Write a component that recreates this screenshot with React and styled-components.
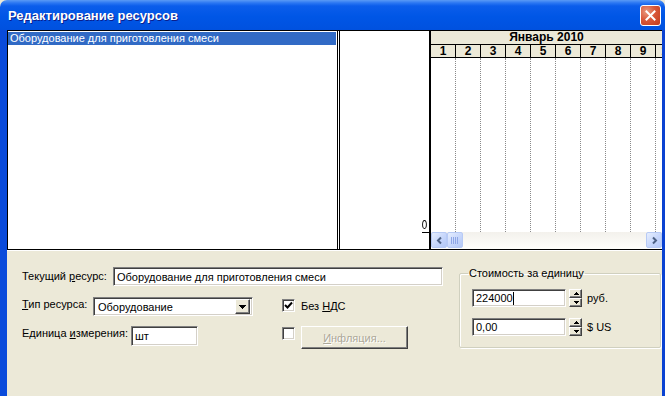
import React from 'react';
import styled, { createGlobalStyle, css } from 'styled-components';

const GlobalStyle = createGlobalStyle`
  html, body {
    margin: 0;
    padding: 0;
    background: #ECE9D8;
    overflow: hidden;
  }
  body {
    font-family: "Liberation Sans", Tahoma, sans-serif;
    font-size: 11px;
    color: #000;
  }
`;

const sunken = css`
  box-sizing: border-box;
  background: #fff;
  border: 1px solid;
  border-color: #808080 #fff #fff #808080;
  box-shadow: inset 1px 1px #404040, inset -1px -1px #D4D0C8;
`;

const raised = css`
  box-sizing: border-box;
  background: #ECE9D8;
  border: 1px solid;
  border-color: #fff #404040 #404040 #fff;
  box-shadow: inset -1px -1px #808080;
`;

const Window = styled.div`
  width: 665px;
  height: 396px;
  display: flex;
  flex-direction: column;
  overflow: hidden;
  background: #ECE9D8;
`;

const TitleBar = styled.div`
  height: 30px;
  flex: none;
  display: flex;
  align-items: center;
  justify-content: space-between;
  box-sizing: border-box;
  padding: 1px 4px 0 8px;
  border-radius: 7px 7px 0 0;
  background: linear-gradient(to bottom, #5A9AF5 0, #2A76F2 3px, #0B5DEB 6px, #0056E6 55%, #0051DF 100%);
`;

const Title = styled.div`
  color: #fff;
  font-family: "Liberation Sans", sans-serif;
  font-weight: bold;
  font-size: 13px;
  text-shadow: 1px 1px #0A1E8C;
`;

const CloseButton = styled.div`
  width: 21px;
  height: 21px;
  box-sizing: border-box;
  border: 1px solid #fff;
  border-radius: 3px;
  background: radial-gradient(circle at 30% 30%, #E99A7F 0, #D9583A 45%, #C13A1A 100%);
  display: flex;
  align-items: center;
  justify-content: center;
`;

const Frame = styled.div`
  flex: 1;
  display: flex;
  flex-direction: column;
  border-left: 7px solid #0A4BDB;
  border-right: 3px solid #0A42D2;
  box-sizing: border-box;
  min-height: 0;
`;

const Panes = styled.div`
  height: 220px;
  flex: none;
  display: flex;
  box-sizing: border-box;
  background: #fff;
  border-top: 1px solid #000;
  border-bottom: 1px solid #000;
`;

const ListPane = styled.div`
  width: 331px;
  flex: none;
  box-sizing: border-box;
  border-left: 1px solid #000;
  border-right: 1px solid #000;
  padding: 1px 1px 0 0;
`;

const ListRow = styled.div`
  height: 13px;
  line-height: 13px;
  padding-left: 2px;
  background: ${({ selected }) => (selected ? '#316AC5' : 'transparent')};
  color: ${({ selected }) => (selected ? '#fff' : '#000')};
  white-space: nowrap;
`;

const Splitter = styled.div`
  width: 1px;
  flex: none;
  background: #fff;
`;

const AxisPane = styled.div`
  width: 90px;
  flex: none;
  box-sizing: border-box;
  border-left: 1px solid #000;
  display: flex;
  flex-direction: column;
  justify-content: flex-end;
  align-items: flex-end;
  padding-bottom: 16px;
`;

const AxisLabel = styled.span`
  font-size: 13px;
  line-height: 12px;
  margin-right: 2px;
  font-family: "DejaVu Sans Condensed", "DejaVu Sans", sans-serif;
  transform: scaleX(0.8);
  transform-origin: right;
`;

const AxisTick = styled.div`
  width: 7px;
  height: 1px;
  margin-top: 1px;
  background: #000;
`;

const Gantt = styled.div`
  flex: 1;
  min-width: 0;
  display: flex;
  flex-direction: column;
  border-left: 2px solid #000;
  overflow: hidden;
`;

const MonthRow = styled.div`
  height: 13px;
  flex: none;
  background: #ECE9D8;
  border-bottom: 1px solid #000;
  text-align: center;
  font-weight: bold;
  font-size: 12px;
  line-height: 13px;
`;

const DayRow = styled.div`
  height: 12px;
  flex: none;
  display: flex;
  background: #ECE9D8;
  border-bottom: 1px solid #000;
`;

const DayCell = styled.div`
  width: 25px;
  flex: none;
  box-sizing: border-box;
  border-right: 1px solid #000;
  text-align: center;
  font-weight: bold;
  font-size: 12px;
  line-height: 12px;
`;

const ChartBody = styled.div`
  flex: 1;
  display: flex;
  background: #fff;
  border-left: 1px solid #E00000;
  margin-left: -1px;
`;

const ChartColumn = styled.div`
  width: 25px;
  flex: none;
  box-sizing: border-box;
  border-right: 1px dotted #8A8A8A;
`;

const Scrollbar = styled.div`
  height: 17px;
  flex: none;
  display: flex;
  align-items: stretch;
  background: linear-gradient(to bottom, #F3F1EC, #FEFEFB);
`;

const ScrollButton = styled.div`
  width: 16px;
  flex: none;
  box-sizing: border-box;
  margin: 0 0 1px 0;
  border: 1px solid #B7CAF5;
  border-radius: 2px;
  background: linear-gradient(135deg, #E6EEFE 0, #C6D6FB 55%, #B4C8F6 100%);
  display: flex;
  align-items: center;
  justify-content: center;
`;

const ScrollTrack = styled.div`
  flex: 1;
`;

const Form = styled.div`
  flex: 1;
  display: flex;
  align-items: flex-start;
  border-top: 1px solid #fff;
  padding: 16px 0 0 15px;
`;

const Fields = styled.div`
  display: grid;
  grid-template-columns: 260px 177px;
  grid-template-rows: 30px 29px 23px;
`;

const Row = styled.div`
  display: flex;
  align-items: flex-start;
  grid-column: ${({ span }) => (span ? '1 / -1' : 'auto')};
`;

const Label = styled.div`
  width: ${({ w }) => w}px;
  flex: none;
  padding-top: ${({ top }) => top || 0}px;
  white-space: nowrap;
  line-height: 13px;
`;

const TextBox = styled.div`
  ${sunken};
  width: ${({ w }) => w}px;
  height: ${({ h }) => h || 19}px;
  padding: 0 3px;
  display: flex;
  align-items: center;
  white-space: nowrap;
`;

const Combo = styled.div`
  ${sunken};
  width: 160px;
  height: 19px;
  padding: 2px 2px 2px 4px;
  display: flex;
  align-items: center;
  justify-content: space-between;
`;

const DropButton = styled.div`
  ${raised};
  width: 15px;
  height: 15px;
  display: flex;
  align-items: center;
  justify-content: center;
`;

const CheckRow = styled.div`
  display: flex;
  align-items: flex-start;
  gap: 6px;
  padding-top: ${({ top }) => top || 0}px;
`;

const CheckBox = styled.div`
  ${sunken};
  width: 13px;
  height: 13px;
  flex: none;
  display: flex;
  align-items: center;
  justify-content: center;
`;

const CheckLabel = styled.div`
  line-height: 13px;
  padding-top: 1px;
`;

const Button = styled.div`
  ${raised};
  width: 107px;
  height: 23px;
  margin-top: -1px;
  display: flex;
  align-items: center;
  justify-content: center;
  color: ${({ disabled }) => (disabled ? '#ACA899' : '#000')};
  text-shadow: ${({ disabled }) => (disabled ? '1px 1px #fff' : 'none')};
`;

const GroupBox = styled.fieldset`
  margin: 0;
  width: 202px;
  height: 81px;
  box-sizing: border-box;
  border: 1px solid #D0D0BF;
  box-shadow: 1px 1px #fff, inset 1px 1px #fff;
  border-radius: 2px;
  padding: 10px 0 0 12px;
  display: flex;
  flex-direction: column;
  gap: 11px;
`;

const Legend = styled.legend`
  padding: 0 1px;
  margin-left: -4px;
  line-height: 12px;
`;

const SpinRow = styled.div`
  display: flex;
  align-items: center;
`;

const SpinButtons = styled.div`
  width: 13px;
  height: 18px;
  margin-left: 3px;
  display: flex;
  flex-direction: column;
`;

const SpinButton = styled.div`
  ${raised};
  flex: 1;
  display: flex;
  align-items: center;
  justify-content: center;
`;

const Unit = styled.div`
  margin-left: 5px;
`;

const Caret = styled.span`
  display: inline-block;
  width: 1px;
  height: 13px;
  background: #000;
  vertical-align: middle;
`;

const days = [1, 2, 3, 4, 5, 6, 7, 8, 9, 10];

const Arrow = ({ dir }) => (
  <svg width="9" height="9" viewBox="0 0 9 9">
    <polyline
      points={dir === 'left' ? '6,1.5 3,4.5 6,7.5' : '3,1.5 6,4.5 3,7.5'}
      fill="none"
      stroke="#4D6185"
      strokeWidth="2"
    />
  </svg>
);

const Triangle = ({ up, size = 7 }) => {
  const h = Math.ceil(size / 2);
  return (
    <svg width={size} height={h} viewBox={`0 0 ${size} ${h}`} shapeRendering="crispEdges">
      <polygon
        points={up ? `${size / 2},0 ${size},${h} 0,${h}` : `0,0 ${size},0 ${size / 2},${h}`}
        fill="#000"
      />
    </svg>
  );
};

const Check = () => (
  <svg width="9" height="9" viewBox="0 0 9 9">
    <polyline points="1,4 3.5,6.5 8,1.5" fill="none" stroke="#000" strokeWidth="2" />
  </svg>
);

const Spin = ({ value, unit, caret }) => (
  <SpinRow>
    <TextBox w={94} h={18}>
      {value}
      {caret && <Caret />}
    </TextBox>
    <SpinButtons>
      <SpinButton>
        <Triangle up size={6} />
      </SpinButton>
      <SpinButton>
        <Triangle size={6} />
      </SpinButton>
    </SpinButtons>
    <Unit>{unit}</Unit>
  </SpinRow>
);

export default function App() {
  return (
    <Window>
      <GlobalStyle />
      <TitleBar>
        <Title>Редактирование ресурсов</Title>
        <CloseButton>
          <svg width="11" height="11" viewBox="0 0 11 11">
            <path d="M1.5 1.5 L9.5 9.5 M9.5 1.5 L1.5 9.5" stroke="#fff" strokeWidth="2" strokeLinecap="square" />
          </svg>
        </CloseButton>
      </TitleBar>
      <Frame>
        <Panes>
          <ListPane>
            <ListRow selected>Оборудование для приготовления смеси</ListRow>
          </ListPane>
          <Splitter />
          <AxisPane>
            <AxisLabel>0</AxisLabel>
            <AxisTick />
          </AxisPane>
          <Gantt>
            <MonthRow>Январь 2010</MonthRow>
            <DayRow>
              {days.map((d) => (
                <DayCell key={d}>{d}</DayCell>
              ))}
            </DayRow>
            <ChartBody>
              {days.map((d) => (
                <ChartColumn key={d} />
              ))}
            </ChartBody>
            <Scrollbar>
              <ScrollButton>
                <Arrow dir="left" />
              </ScrollButton>
              <ScrollButton>
                <svg width="8" height="7" viewBox="0 0 8 7">
                  <path d="M0.5 0 V7 M2.5 0 V7 M4.5 0 V7 M6.5 0 V7" stroke="#8EA6E6" strokeWidth="1" />
                </svg>
              </ScrollButton>
              <ScrollTrack />
              <ScrollButton>
                <Arrow dir="right" />
              </ScrollButton>
            </Scrollbar>
          </Gantt>
        </Panes>
        <Form>
          <Fields>
            <Row span>
              <Label w={91} top={3}>
                Текущий <u>р</u>есурс:
              </Label>
              <TextBox w={330}>Оборудование для приготовления смеси</TextBox>
            </Row>
            <Row>
              <Label w={71} top={1}>
                <u>Т</u>ип ресурса:
              </Label>
              <Combo>
                <span>Оборудование</span>
                <DropButton>
                  <Triangle />
                </DropButton>
              </Combo>
            </Row>
            <CheckRow top={2}>
              <CheckBox>
                <Check />
              </CheckBox>
              <CheckLabel>
                Без <u>Н</u>ДС
              </CheckLabel>
            </CheckRow>
            <Row>
              <Label w={109} top={1}>
                Единица <u>и</u>змерения:
              </Label>
              <TextBox w={67} h={20}>
                шт
              </TextBox>
            </Row>
            <CheckRow top={1}>
              <CheckBox />
              <Button disabled>
                <span>
                  <u>И</u>нфляция...
                </span>
              </Button>
            </CheckRow>
          </Fields>
          <GroupBox>
            <Legend>Стоимость за единицу</Legend>
            <Spin value="224000" unit="руб." caret />
            <Spin value="0,00" unit="$ US" />
          </GroupBox>
        </Form>
      </Frame>
    </Window>
  );
}
